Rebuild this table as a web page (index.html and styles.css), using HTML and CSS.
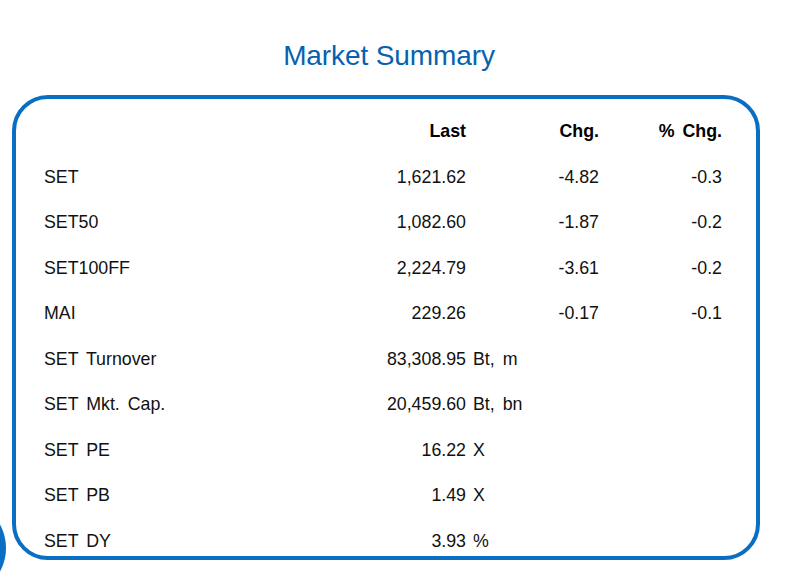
FILE: index.html
```html
<!DOCTYPE html>
<html lang="en">
<head>
<meta charset="utf-8">
<title>Market Summary</title>
<link rel="stylesheet" href="styles.css">
</head>
<body>
<div class="slide">
  <h1 class="title">Market Summary</h1>
  <div class="panel">
    <div class="grid">
      <div class="cell head"></div>
      <div class="cell num head">Last</div>
      <div class="cell"></div>
      <div class="cell num head">Chg.</div>
      <div class="cell num head">% Chg.</div>

      <div class="cell">SET</div>
      <div class="cell num">1,621.62</div>
      <div class="cell unit"></div>
      <div class="cell num">-4.82</div>
      <div class="cell num">-0.3</div>

      <div class="cell">SET50</div>
      <div class="cell num">1,082.60</div>
      <div class="cell unit"></div>
      <div class="cell num">-1.87</div>
      <div class="cell num">-0.2</div>

      <div class="cell">SET100FF</div>
      <div class="cell num">2,224.79</div>
      <div class="cell unit"></div>
      <div class="cell num">-3.61</div>
      <div class="cell num">-0.2</div>

      <div class="cell">MAI</div>
      <div class="cell num">229.26</div>
      <div class="cell unit"></div>
      <div class="cell num">-0.17</div>
      <div class="cell num">-0.1</div>

      <div class="cell">SET Turnover</div>
      <div class="cell num">83,308.95</div>
      <div class="cell unit">Bt, m</div>
      <div class="cell num"></div>
      <div class="cell num"></div>

      <div class="cell">SET Mkt. Cap.</div>
      <div class="cell num">20,459.60</div>
      <div class="cell unit">Bt, bn</div>
      <div class="cell num"></div>
      <div class="cell num"></div>

      <div class="cell">SET PE</div>
      <div class="cell num">16.22</div>
      <div class="cell unit">X</div>
      <div class="cell num"></div>
      <div class="cell num"></div>

      <div class="cell">SET PB</div>
      <div class="cell num">1.49</div>
      <div class="cell unit">X</div>
      <div class="cell num"></div>
      <div class="cell num"></div>

      <div class="cell">SET DY</div>
      <div class="cell num">3.93</div>
      <div class="cell unit">%</div>
      <div class="cell num"></div>
      <div class="cell num"></div>
    </div>
  </div>
  <div class="dot"></div>
</div>
</body>
</html>
```
FILE: styles.css
```css
html, body {
  margin: 0;
  padding: 0;
  background: #ffffff;
}
body {
  font-family: "Liberation Sans", Arial, Helvetica, sans-serif;
  color: #111111;
}
.slide {
  position: relative;
  width: 786px;
  height: 588px;
  overflow: hidden;
}
.title {
  margin: 0;
  padding-top: 40px;
  height: 58px;
  box-sizing: border-box;
  text-align: center;
  font-weight: normal;
  font-size: 28px;
  line-height: 32px;
  color: #0562b0;
  letter-spacing: -0.1px;
  transform: translateX(-4px);
}
.panel {
  margin-top: 37px;
  margin-left: 12px;
  width: 748px;
  height: 465px;
  box-sizing: border-box;
  border: 4px solid #0a6fc2;
  border-radius: 36px;
  padding: 10px 0 0 28px;
}
.grid {
  display: grid;
  grid-template-columns: 250px 172px 60px 73px 123px;
  grid-auto-rows: 45.5px;
  font-size: 17.8px;
  word-spacing: 3px;
}
.cell {
  display: flex;
  align-items: center;
  white-space: nowrap;
}
.num {
  justify-content: flex-end;
}
.unit {
  padding-left: 7px;
}
.head {
  font-weight: bold;
  color: #000000;
}
.dot {
  position: absolute;
  left: -92px;
  top: 499px;
  width: 98px;
  height: 98px;
  border-radius: 50%;
  background: #0a6fc2;
}
```
